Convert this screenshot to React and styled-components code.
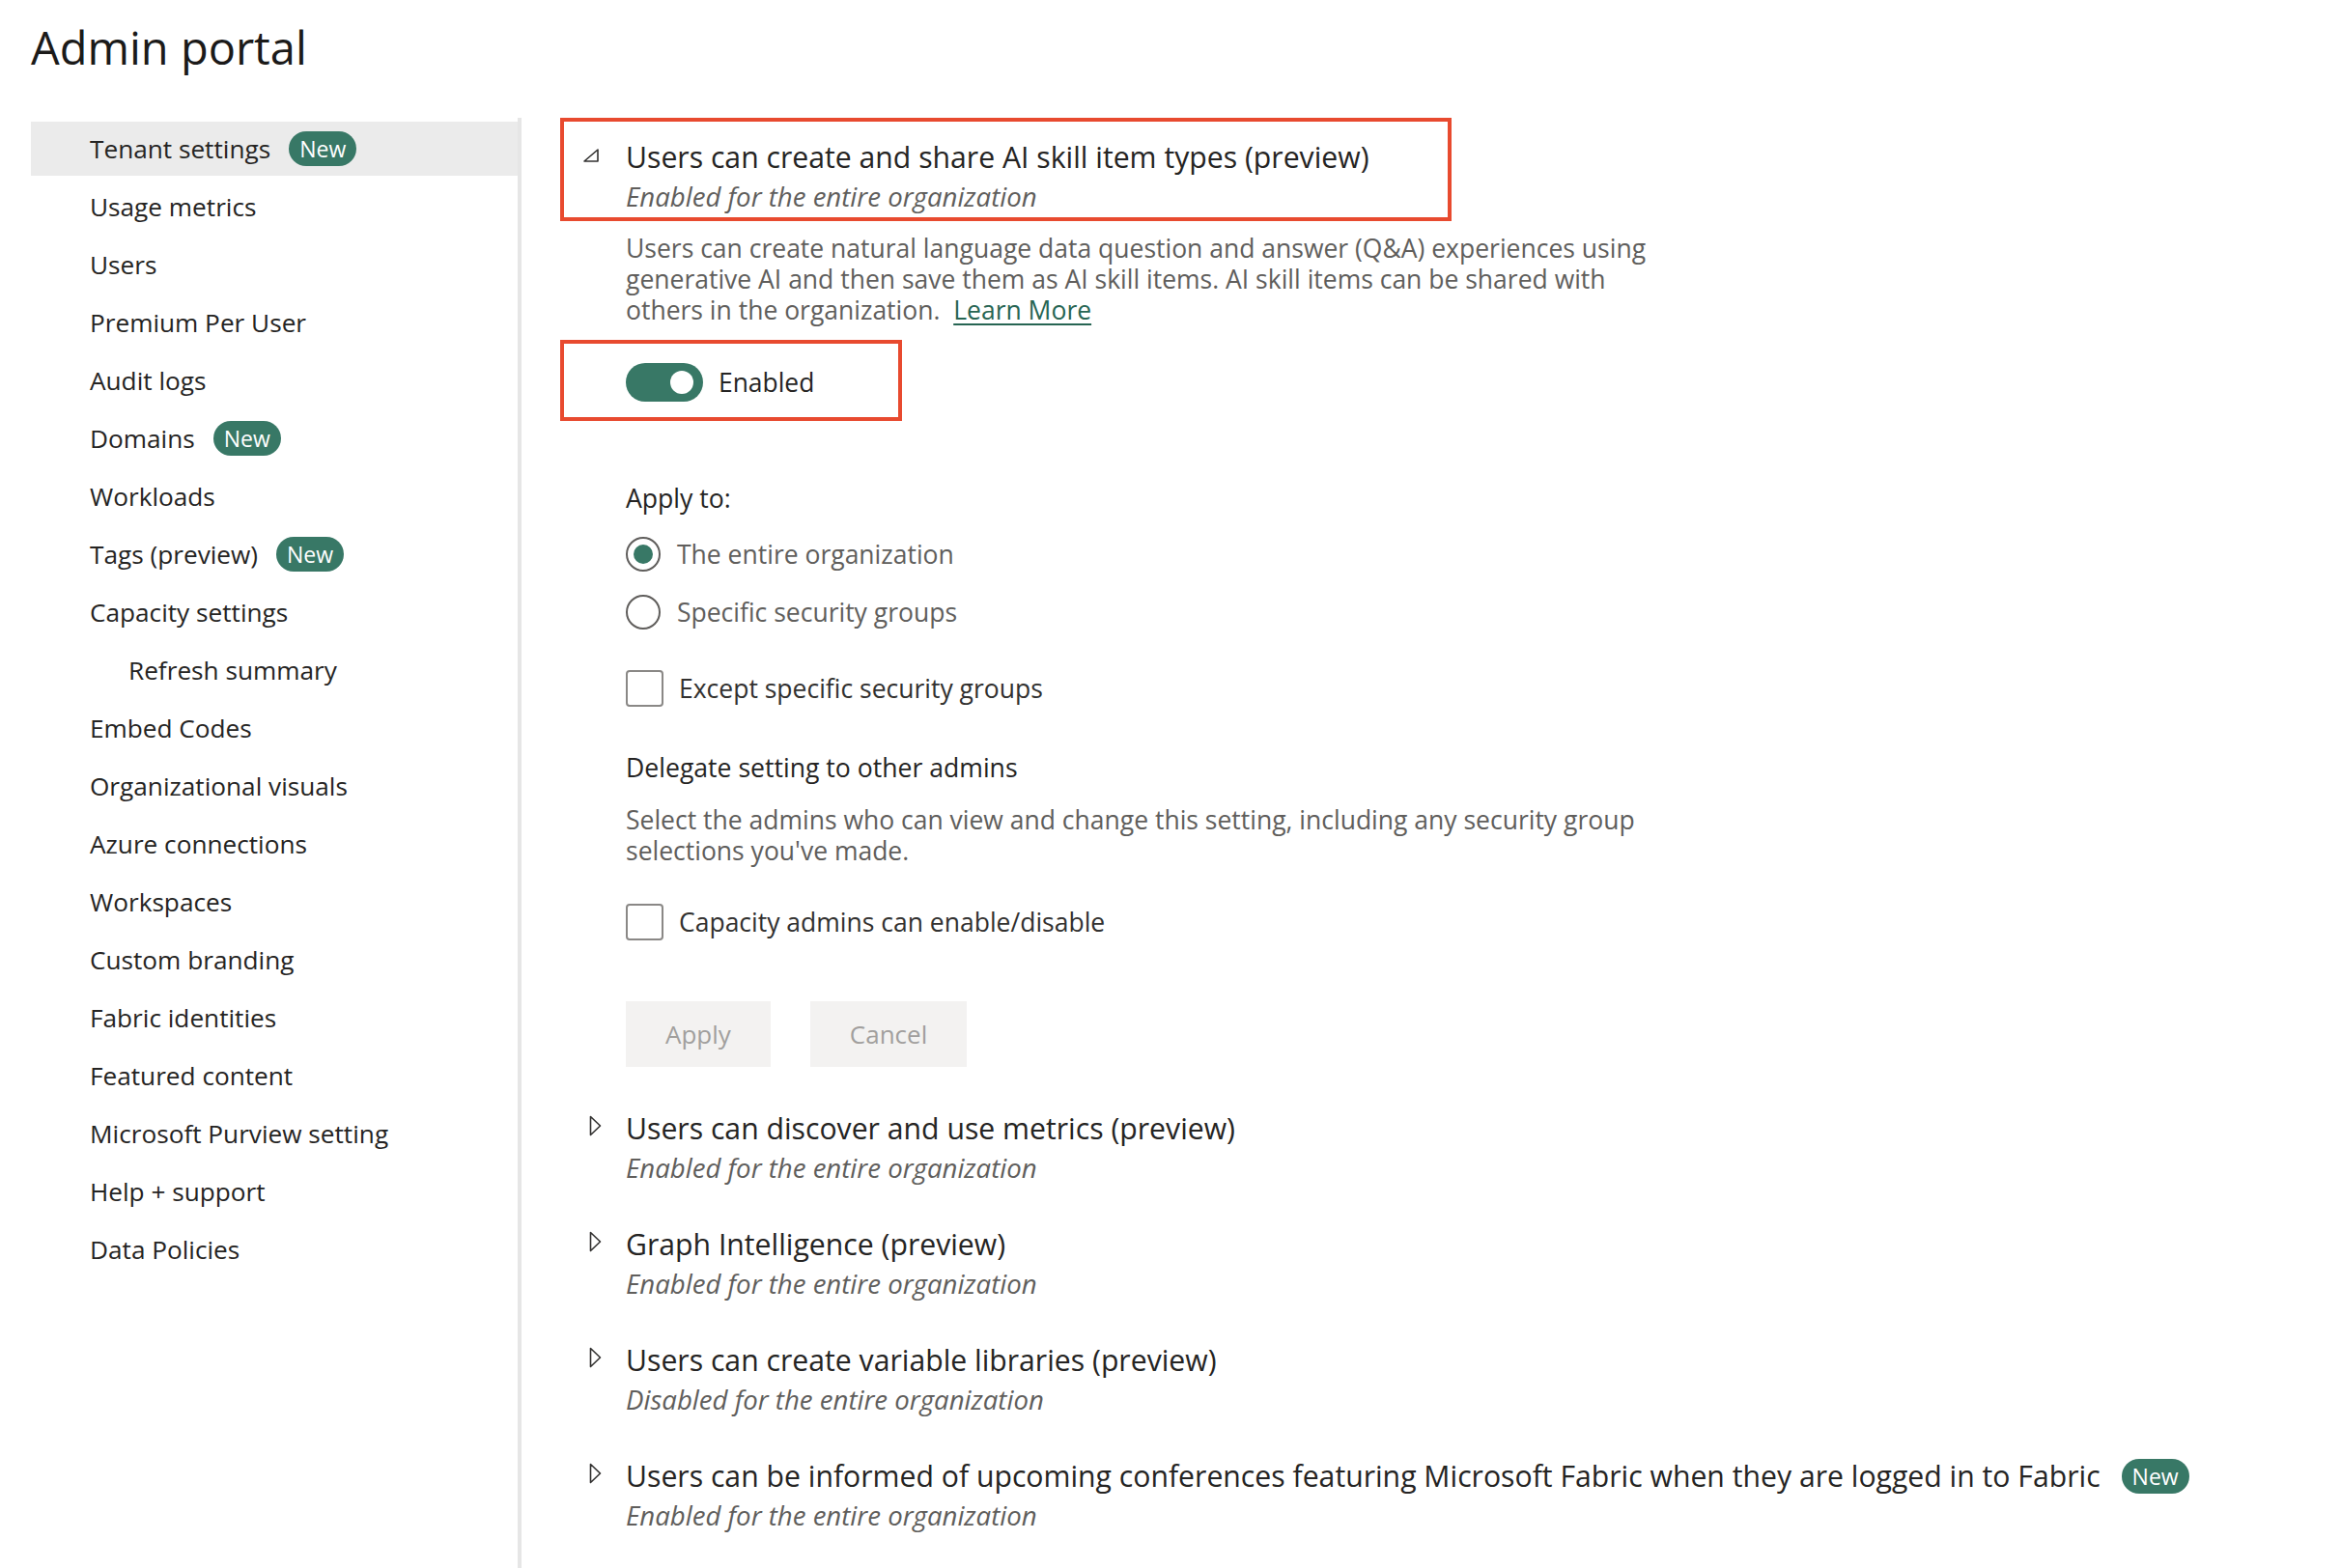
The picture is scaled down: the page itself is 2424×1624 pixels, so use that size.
import React from "react";
import styled, { createGlobalStyle } from "styled-components";

const GlobalStyle = createGlobalStyle`
  html, body { margin: 0; padding: 0; background: #ffffff; }
  body { font-family: "Open Sans", "Noto Sans", "Liberation Sans", sans-serif; color: #252423; }
  * { box-sizing: border-box; }
`;

const Page = styled.div`
  min-height: 100vh;
  display: flex;
  flex-direction: column;
  padding: 0 0 0 32px;
`;

const PageTitle = styled.h1`
  margin: 0;
  padding-top: 17px;
  font-size: 47px;
  font-weight: 400;
  line-height: 64px;
  color: #1b1a19;
  height: 122px;
`;

const Body = styled.div`
  flex: 1;
  display: flex;
  align-items: stretch;
`;

const Sidebar = styled.nav`
  width: 508px;
  flex: none;
  border-right: 4px solid #e6e6e6;
  padding-top: 4px;
  display: flex;
  flex-direction: column;
`;

const NavItem = styled.div`
  height: 56px;
  margin-bottom: 4px;
  display: flex;
  align-items: center;
  gap: 19px;
  padding-left: ${(p) => (p.$indent ? 101 : 61)}px;
  background: ${(p) => (p.$active ? "#ebebeb" : "transparent")};
  font-size: 26.2px;
  color: #252423;
  white-space: nowrap;
`;

const Badge = styled.span`
  display: inline-flex;
  align-items: center;
  justify-content: center;
  height: 36px;
  padding: 0 11px;
  border-radius: 18px;
  background: #387866;
  color: #ffffff;
  font-size: 23px;
  line-height: 1;
`;

const Main = styled.main`
  flex: 1;
  padding-left: 40px;
  display: flex;
  flex-direction: column;
  align-items: flex-start;
`;

const Highlight = styled.div`
  border: 4px solid #e84a2f;
  width: ${(p) => p.$w}px;
  padding: ${(p) => p.$pad};
  margin-top: ${(p) => p.$mt || 0}px;
`;

const SettingHeader = styled.div`
  display: flex;
  align-items: flex-start;
  padding: ${(p) => (p.$collapsed ? "0 0 0 20px" : "0")};
`;

const CaretCol = styled.div`
  width: 48px;
  flex: none;
  display: flex;
  padding-left: ${(p) => p.$pl}px;
  padding-top: ${(p) => p.$pt}px;
`;

const HeaderText = styled.div`
  display: flex;
  flex-direction: column;
`;

const SettingTitle = styled.div`
  font-size: 30.2px;
  line-height: 42px;
  color: #252423;
  display: flex;
  align-items: center;
  gap: 22px;
  white-space: nowrap;
`;

const SettingStatus = styled.div`
  font-size: 27.6px;
  line-height: 38px;
  font-style: italic;
  color: #605e5c;
`;

const Section = styled.div`
  padding-left: 68px;
  margin-top: ${(p) => p.$mt || 0}px;
`;

const Description = styled.p`
  margin: ${(p) => p.$mt || 0}px 0 0;
  max-width: 1070px;
  font-size: 26.5px;
  line-height: 32px;
  color: #605e5c;
`;

const Link = styled.a`
  color: #276553;
  text-decoration: underline;
  text-underline-offset: 4px;
`;

const ToggleRow = styled.div`
  display: flex;
  align-items: center;
  gap: 16px;
  font-size: 26.4px;
  color: #252423;
`;

const Track = styled.span`
  width: 80px;
  height: 40px;
  border-radius: 20px;
  background: #387866;
  display: flex;
  align-items: center;
  justify-content: flex-end;
  padding-right: 10px;
`;

const Knob = styled.span`
  width: 24px;
  height: 24px;
  border-radius: 50%;
  background: #ffffff;
`;

const Label = styled.div`
  margin-top: ${(p) => p.$mt || 0}px;
  font-size: 26.6px;
  line-height: 36px;
  color: #252423;
`;

const OptionRow = styled.div`
  display: flex;
  align-items: center;
  height: ${(p) => p.$h || 36}px;
  gap: ${(p) => p.$gap || 17}px;
  margin-top: ${(p) => p.$mt || 0}px;
  font-size: 26.5px;
  color: ${(p) => (p.$muted ? "#605e5c" : "#323130")};
`;

const Radio = styled.span`
  width: 36px;
  height: 36px;
  border-radius: 50%;
  border: 2px solid #605e5c;
  display: flex;
  align-items: center;
  justify-content: center;
  &::after {
    content: "";
    width: 20px;
    height: 20px;
    border-radius: 50%;
    background: ${(p) => (p.$checked ? "#387866" : "transparent")};
  }
`;

const Checkbox = styled.span`
  width: 39px;
  height: 38px;
  border-radius: 4px;
  border: 2px solid #8a8886;
`;

const Buttons = styled.div`
  display: flex;
  gap: 41px;
  margin-top: 63px;
`;

const Button = styled.button`
  height: 68px;
  padding: 0 41px;
  border: none;
  background: #f3f2f1;
  color: #a19f9d;
  font-family: inherit;
  font-size: 26px;
`;

const CollapsedList = styled.div`
  display: flex;
  flex-direction: column;
  gap: 40px;
  margin-top: 43px;
`;

const CaretDown = () => (
  <svg width="16" height="14" viewBox="0 0 16 14">
    <path d="M15 1 L15 13 L1 13 Z" fill="none" stroke="#323130" strokeWidth="1.6" strokeLinejoin="round" />
  </svg>
);

const CaretRight = () => (
  <svg width="13" height="22" viewBox="0 0 13 22">
    <path d="M1.5 1.5 L11.5 11 L1.5 20.5 Z" fill="none" stroke="#323130" strokeWidth="1.6" strokeLinejoin="round" />
  </svg>
);

const navItems = [
  { label: "Tenant settings", badge: true, active: true },
  { label: "Usage metrics" },
  { label: "Users" },
  { label: "Premium Per User" },
  { label: "Audit logs" },
  { label: "Domains", badge: true },
  { label: "Workloads" },
  { label: "Tags (preview)", badge: true },
  { label: "Capacity settings" },
  { label: "Refresh summary", indent: true },
  { label: "Embed Codes" },
  { label: "Organizational visuals" },
  { label: "Azure connections" },
  { label: "Workspaces" },
  { label: "Custom branding" },
  { label: "Fabric identities" },
  { label: "Featured content" },
  { label: "Microsoft Purview setting" },
  { label: "Help + support" },
  { label: "Data Policies" },
];

const collapsed = [
  { title: "Users can discover and use metrics (preview)", status: "Enabled for the entire organization" },
  { title: "Graph Intelligence (preview)", status: "Enabled for the entire organization" },
  { title: "Users can create variable libraries (preview)", status: "Disabled for the entire organization" },
  {
    title: "Users can be informed of upcoming conferences featuring Microsoft Fabric when they are logged in to Fabric",
    status: "Enabled for the entire organization",
    badge: true,
  },
];

export default function App() {
  return (
    <>
      <GlobalStyle />
      <Page>
        <PageTitle>Admin portal</PageTitle>
        <Body>
          <Sidebar>
            {navItems.map((n) => (
              <NavItem key={n.label} $active={n.active} $indent={n.indent}>
                {n.label}
                {n.badge && <Badge>New</Badge>}
              </NavItem>
            ))}
          </Sidebar>
          <Main>
            <Highlight $w={923} $pad="16px 0 3px 16px">
              <SettingHeader>
                <CaretCol $pl={4} $pt={12}>
                  <CaretDown />
                </CaretCol>
                <HeaderText>
                  <SettingTitle>Users can create and share AI skill item types (preview)</SettingTitle>
                  <SettingStatus>Enabled for the entire organization</SettingStatus>
                </HeaderText>
              </SettingHeader>
            </Highlight>

            <Section $mt={12}>
              <Description>
                Users can create natural language data question and answer (Q&amp;A) experiences using
                generative AI and then save them as AI skill items. AI skill items can be shared with
                others in the organization.{"\u00a0\u00a0"}
                <Link href="#">Learn More</Link>
              </Description>
            </Section>

            <Highlight $w={354} $pad="20px 0 16px 64px" $mt={15}>
              <ToggleRow>
                <Track>
                  <Knob />
                </Track>
                Enabled
              </ToggleRow>
            </Highlight>

            <Section $mt={62}>
              <Label>Apply to:</Label>
              <OptionRow $muted $mt={22}>
                <Radio $checked />
                The entire organization
              </OptionRow>
              <OptionRow $muted $mt={24}>
                <Radio />
                Specific security groups
              </OptionRow>
              <OptionRow $h={38} $gap={16} $mt={42}>
                <Checkbox />
                Except specific security groups
              </OptionRow>

              <Label $mt={45}>Delegate setting to other admins</Label>
              <Description $mt={20}>
                Select the admins who can view and change this setting, including any security group
                selections you've made.
              </Description>
              <OptionRow $h={38} $gap={16} $mt={39}>
                <Checkbox />
                Capacity admins can enable/disable
              </OptionRow>

              <Buttons>
                <Button>Apply</Button>
                <Button>Cancel</Button>
              </Buttons>
            </Section>

            <CollapsedList>
              {collapsed.map((c) => (
                <SettingHeader key={c.title} $collapsed>
                  <CaretCol $pl={10} $pt={7}>
                    <CaretRight />
                  </CaretCol>
                  <HeaderText>
                    <SettingTitle>
                      {c.title}
                      {c.badge && <Badge>New</Badge>}
                    </SettingTitle>
                    <SettingStatus>{c.status}</SettingStatus>
                  </HeaderText>
                </SettingHeader>
              ))}
            </CollapsedList>
          </Main>
        </Body>
      </Page>
    </>
  );
}
